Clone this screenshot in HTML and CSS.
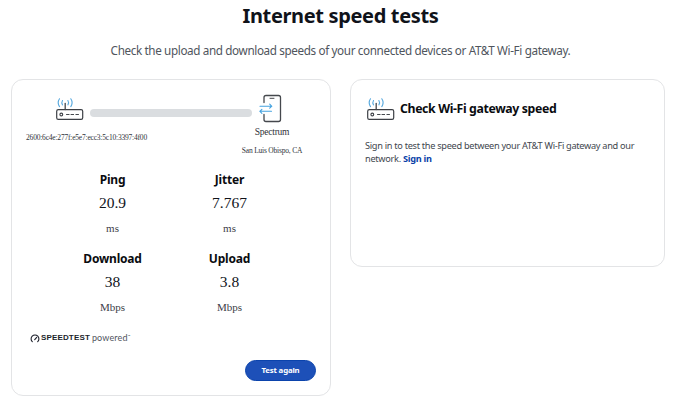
FILE: index.html
```
<!DOCTYPE html>
<html lang="en">
<head>
<meta charset="utf-8">
<title>Internet speed tests</title>
<link rel="stylesheet" href="styles.css">
</head>
<body>
<svg class="defs" width="0" height="0" aria-hidden="true">
  <symbol id="router" viewBox="0 0 28 24">
    <g fill="none" stroke-linecap="round">
      <rect x="0.700" y="11.700" width="26" height="9.600" rx="1.600" stroke="#3c3f45" stroke-width="1.200"/>
      <circle cx="5.300" cy="16.500" r="1.400" stroke="#3c3f45" stroke-width="1.100"/>
      <path d="M10.500 16.500h2.600M15 16.500h2.600M19.900 16.500h2.600" stroke="#45484d" stroke-width="1"/>
      <path d="M9.200 5.500v6" stroke="#45484d" stroke-width="1.300"/>
      <path d="M6.500 2.500q-1.400 2.200 0 4.400M3.500 0.800q-2.600 3.900 0 7.800M11.900 2.500q1.400 2.200 0 4.400M14.800 0.800q2.600 3.900 0 7.800" stroke="#58a9de" stroke-width="1.100"/>
    </g>
  </symbol>
</svg>
<header class="hero">
  <h1>Internet speed tests</h1>
  <p>Check the upload and download speeds of your connected devices or AT&amp;T Wi-Fi gateway.</p>
</header>
<main class="cards">
  <section class="card results">
    <div class="route">
      <svg class="router"><use href="#router"/></svg>
      <div class="bar"></div>
      <svg class="phone" viewBox="0 0 23 29" fill="none" stroke-linecap="round">
        <path d="M5 8.500V3.500Q5 1.500 7 1.500H19.500Q21.500 1.500 21.500 3.500V25.500Q21.500 27.500 19.500 27.500H7Q5 27.500 5 25.500V20.500" stroke="#45484d" stroke-width="1.300"/>
        <path d="M11 4.300h4" stroke="#45484d"/>
        <path d="M1 12.200h11.500M10.700 10.200l2 2-2 2M12.500 17.300H1M2.900 15.300l-2 2 2 2" stroke="#45a3e0" stroke-width="1.100"/>
      </svg>
    </div>
    <div class="ends">
      <div class="address">2600:6c4e:277f:e5e7:ecc3:5c10:3397:4f00</div>
      <div class="provider">
        <div class="isp">Spectrum</div>
        <div class="city">San Luis Obispo, CA</div>
      </div>
    </div>
    <div class="metrics">
      <div class="metric"><h3>Ping</h3><strong>20.9</strong><small>ms</small></div>
      <div class="metric"><h3>Jitter</h3><strong>7.767</strong><small>ms</small></div>
      <div class="metric"><h3>Download</h3><strong>38</strong><small>Mbps</small></div>
      <div class="metric"><h3>Upload</h3><strong>3.8</strong><small>Mbps</small></div>
    </div>
    <div class="powered">
      <svg width="10" height="9" viewBox="0 0 10 9" fill="none" stroke="#1c1f2b" stroke-width="1.100" stroke-linecap="round"><path d="M2.300 7.700A3.900 3.900 0 1 1 7.700 7.700M4.700 5.700l2-2.300"/></svg>
      <b>SPEEDTEST</b><span>powered</span><i>™</i>
    </div>
    <button class="again">Test again</button>
  </section>
  <section class="card gateway">
    <div class="gateway-head">
      <svg class="router"><use href="#router"/></svg>
      <h2>Check Wi-Fi gateway speed</h2>
    </div>
    <p>Sign in to test the speed between your AT&amp;T Wi-Fi gateway and our<br>network. <a>Sign in</a></p>
  </section>
</main>
</body>
</html>
```
FILE: styles.css
```
* { box-sizing: border-box; margin: 0; padding: 0; }
body { background: #fff; color: #10131a; font-family: "Noto Sans", sans-serif; width: 690px; height: 406px; overflow: hidden; }
.defs { display: block; }
.hero { width: 681px; height: 79px; text-align: center; white-space: nowrap; }
.hero h1 { height: 32px; font-size: 20px; line-height: 32px; font-weight: 700; letter-spacing: -0.35px; }
.hero p { margin-top: 8px; font-size: 11.7px; line-height: 21px; color: #4f555d; letter-spacing: -0.37px; }
.cards { display: flex; align-items: flex-start; gap: 19px; padding-left: 11px; }
.card { border: 1px solid #e3e4e6; border-radius: 12px; background: #fff; }
.results { width: 320px; height: 317px; padding-top: 14px; display: flex; flex-direction: column; }
.route { display: flex; height: 30px; padding-left: 44px; }
.router { width: 28px; height: 24px; flex: none; margin-top: 4px; }
.bar { width: 162px; height: 8px; margin: 15px 7px 0 6px; border-radius: 4px; background: #dadde0; }
.phone { width: 23px; height: 29px; }
.ends { display: flex; height: 50px; font-family: "Liberation Serif", serif; color: #30333a; white-space: nowrap; }
.address { width: 149px; padding-top: 7px; font-size: 7.5px; line-height: 14px; text-align: center; letter-spacing: -0.2px; }
.provider { width: 100px; margin-left: 61px; text-align: center; }
.isp { padding-top: 1px; font-size: 9.5px; line-height: 14px; letter-spacing: -0.25px; }
.city { margin-top: 5px; font-size: 7.5px; line-height: 14px; letter-spacing: -0.2px; }
.metrics { display: grid; grid-template-columns: 117px 117px; grid-auto-rows: 79px; margin: -5px 0 0 42px; }
.metric { display: flex; flex-direction: column; align-items: center; }
.metric h3 { font-size: 12px; line-height: 22px; color: #0a0c10; letter-spacing: -0.2px; }
.metric strong { font: 400 15.5px/24px "Liberation Serif", serif; color: #10131a; }
.metric small { margin-top: 2px; font: 400 11px/22px "Liberation Serif", serif; color: #3c4048; }
.powered { display: flex; align-items: center; height: 12px; margin: 5px 0 0 18px; color: #1c1f2b; }
.powered b { margin-left: 1px; font: 700 8px/12px "Liberation Sans", sans-serif; letter-spacing: 0.15px; }
.powered span { margin-left: 2px; color: #50545e; font: 9px/12px Lato, sans-serif; letter-spacing: 0.15px; }
.powered i { font-size: 3px; font-style: normal; line-height: 8px; align-self: flex-start; }
.again { width: 71px; height: 21px; margin: 16px 0 0 233px; border: 1px solid #0b43ac; border-radius: 11px; background: #1d50b8; color: #fff; font: 700 7.8px/19px "Noto Sans", sans-serif; letter-spacing: -0.15px; }
.gateway { width: 315px; height: 188px; padding: 14px 0 0 14px; }
.gateway-head { display: flex; height: 38px; gap: 5px; margin-left: 2px; }
.gateway-head h2 { font-size: 12.3px; line-height: 30px; color: #0a0c10; letter-spacing: -0.37px; white-space: nowrap; }
.gateway p { margin-top: 7px; font-size: 9.2px; line-height: 13px; color: #41464e; letter-spacing: -0.29px; white-space: nowrap; }
.gateway a { color: #0a3fa8; font-weight: 700; }
```
